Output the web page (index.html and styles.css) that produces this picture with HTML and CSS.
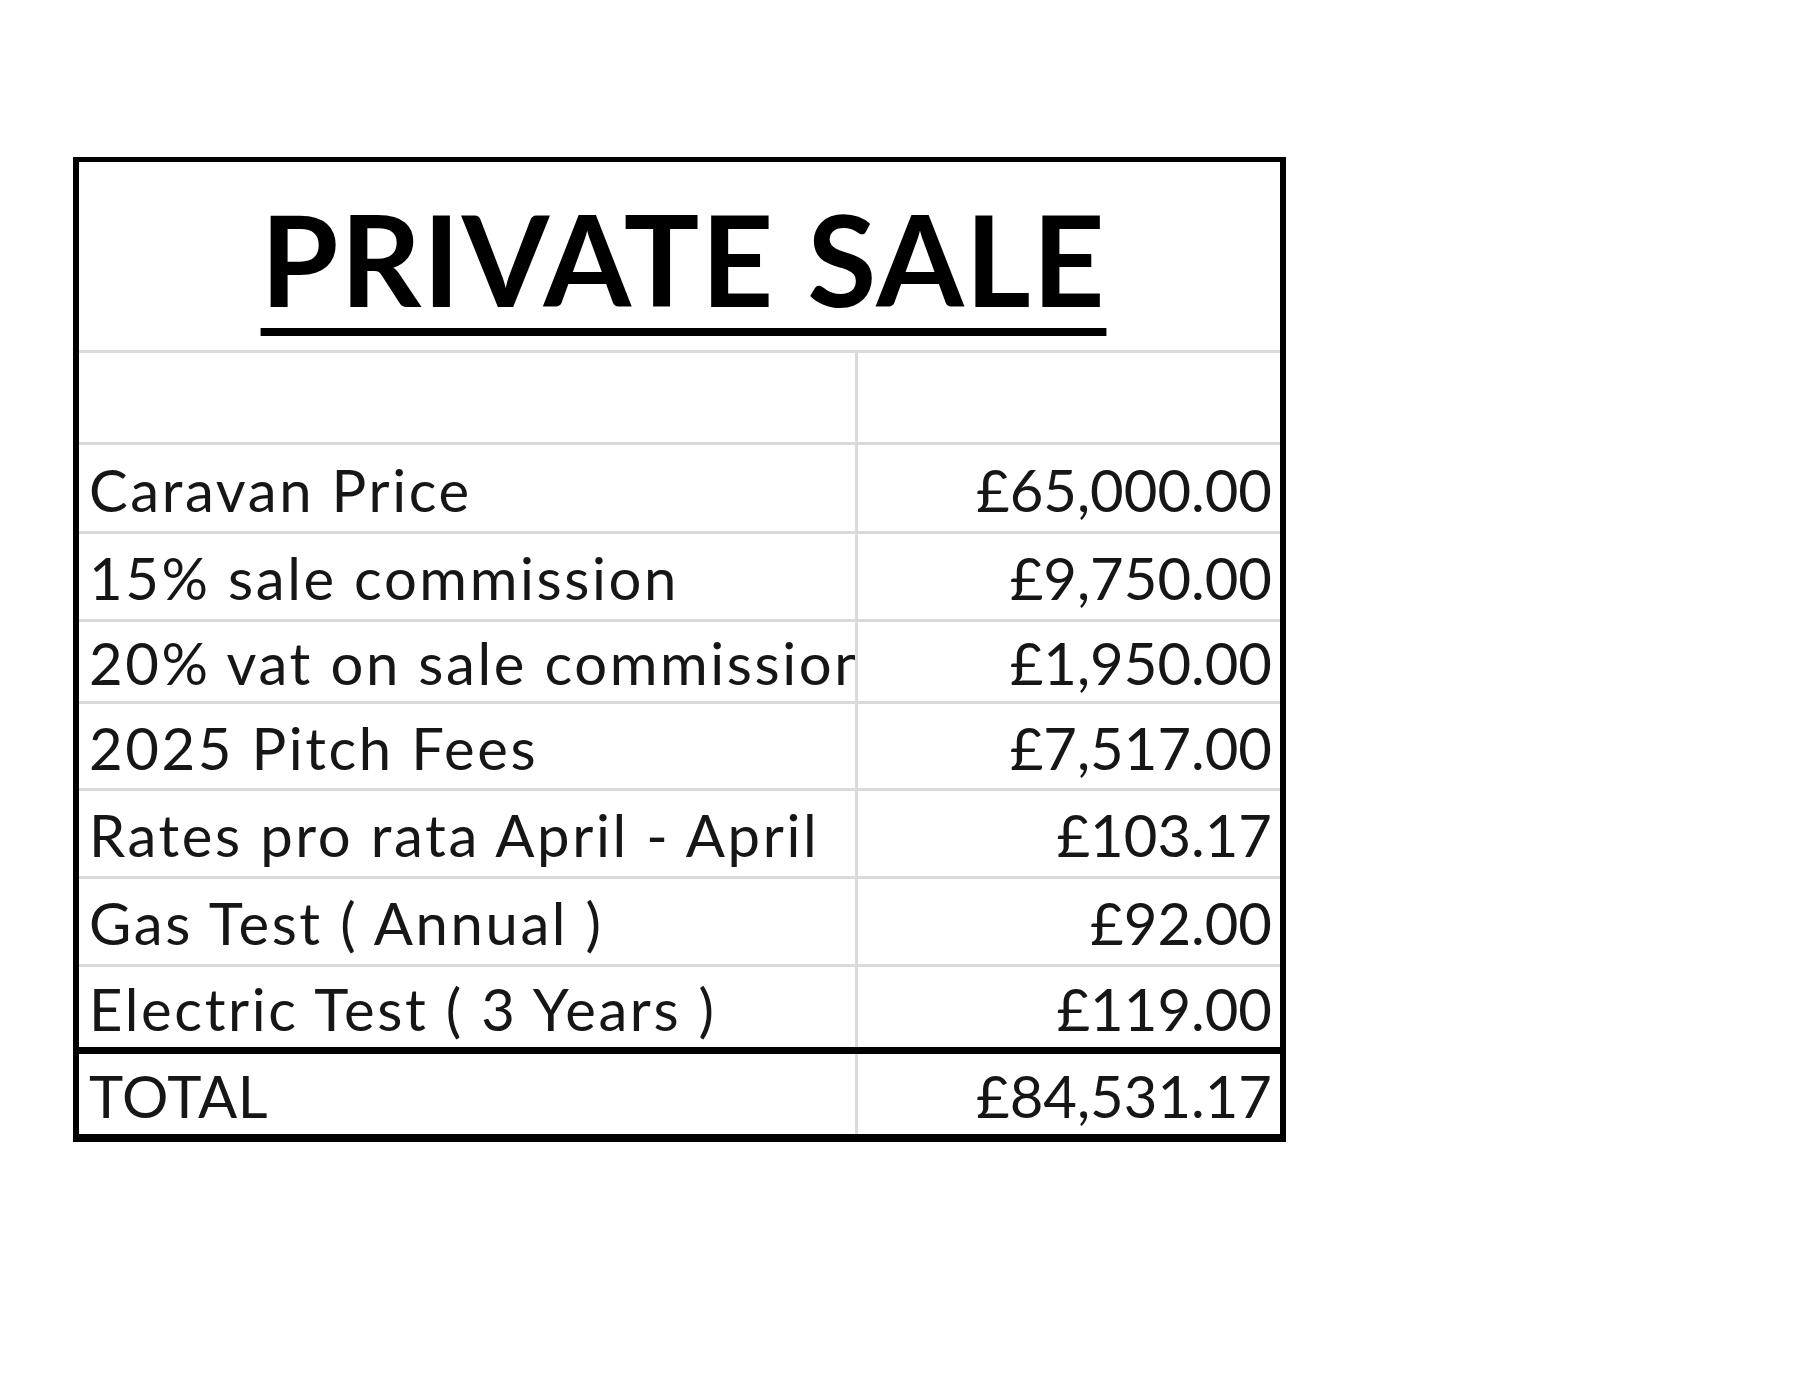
FILE: index.html
```html
<!DOCTYPE html>
<html lang="en">
<head>
<meta charset="utf-8">
<title>Private Sale</title>
<link rel="stylesheet" href="styles.css">
</head>
<body>
<div class="sheet">
  <div class="title"><span class="title-text">PRIVATE SALE</span></div>
  <div class="row"><div class="label"></div><div class="value"></div></div>
  <div class="row"><div class="label">Caravan Price</div><div class="value">£65,000.00</div></div>
  <div class="row"><div class="label">15% sale commission</div><div class="value">£9,750.00</div></div>
  <div class="row"><div class="label">20% vat on sale commission</div><div class="value">£1,950.00</div></div>
  <div class="row"><div class="label">2025 Pitch Fees</div><div class="value">£7,517.00</div></div>
  <div class="row"><div class="label">Rates pro rata April - April</div><div class="value">£103.17</div></div>
  <div class="row"><div class="label">Gas Test ( Annual )</div><div class="value">£92.00</div></div>
  <div class="row row-last"><div class="label">Electric Test ( 3 Years )</div><div class="value">£119.00</div></div>
  <div class="row row-total"><div class="label">TOTAL</div><div class="value">£84,531.17</div></div>
</div>
</body>
</html>
```

FILE: styles.css
```css
html, body {
  margin: 0;
  padding: 0;
  background: #ffffff;
}

body {
  font-family: Lato, "Open Sans", "Liberation Sans", sans-serif;
  color: #161616;
}

.sheet {
  margin: 157px 0 0 73px;
  width: 1213px;
  box-sizing: border-box;
  border-style: solid;
  border-color: #000;
  border-width: 5px 6px 8px 6px;
  display: grid;
  grid-template-rows: 191px 92px 89px 88px 82px 87px 88px 88px 80px 87px;
}

.title {
  display: flex;
  align-items: center;
  justify-content: center;
  box-sizing: border-box;
  padding-top: 6px;
  padding-left: 8px;
  border-bottom: 3px solid #dadada;
}

.title-text {
  font-weight: 700;
  font-size: 126px;
  line-height: 1;
  letter-spacing: 1.6px;
  color: #000;
  text-decoration: underline;
  text-decoration-thickness: 8px;
  text-underline-offset: 21px;
}

.row {
  display: grid;
  grid-template-columns: 779px 1fr;
  box-sizing: border-box;
  border-bottom: 3px solid #dadada;
  font-size: 58px;
  line-height: 1;
}

.row-last {
  border-bottom: none;
}

.row-total {
  border-top: 7px solid #000;
  border-bottom: none;
}

.label,
.value {
  display: flex;
  align-items: center;
  padding-top: 3px;
  box-sizing: border-box;
  white-space: nowrap;
  overflow: hidden;
}

.label {
  padding-left: 10px;
  letter-spacing: 2.6px;
  border-right: 3px solid #dadada;
}

.row-total .label {
  letter-spacing: 0.6px;
}

.value {
  justify-content: flex-end;
  padding-right: 8px;
}
```
